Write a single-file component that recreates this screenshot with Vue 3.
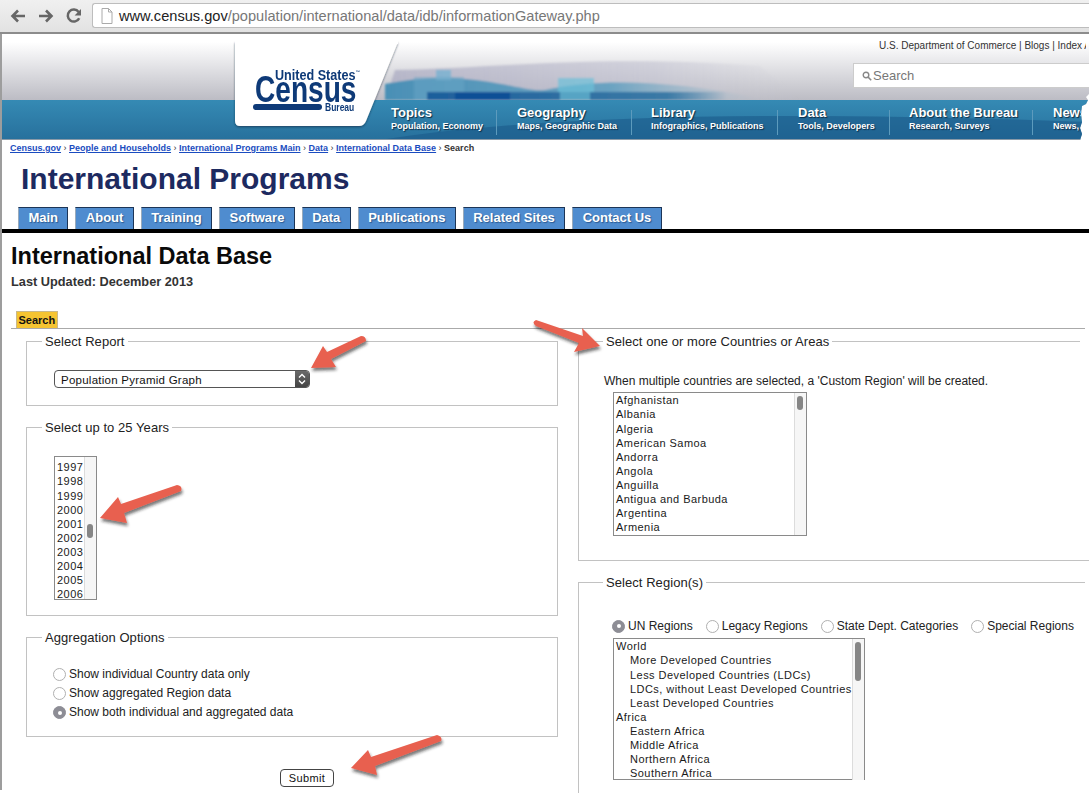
<script setup>
const nav = [
  { t: 'Topics', s: 'Population, Economy', w: 117, p: 11 },
  { t: 'Geography', s: 'Maps, Geographic Data', w: 135, p: 20 },
  { t: 'Library', s: 'Infographics, Publications', w: 146, p: 19 },
  { t: 'Data', s: 'Tools, Developers', w: 112, p: 20 },
  { t: 'About the Bureau', s: 'Research, Surveys', w: 143, p: 19 },
  { t: 'Newsroom', s: 'News, Events, Blogs', w: 140, p: 20 }
]
const crumbs = ['Census.gov', 'People and Households', 'International Programs Main', 'Data', 'International Data Base']
const tabs = ['Main', 'About', 'Training', 'Software', 'Data', 'Publications', 'Related Sites', 'Contact Us']
const years = ['1997', '1998', '1999', '2000', '2001', '2002', '2003', '2004', '2005', '2006']
const countries = ['Afghanistan', 'Albania', 'Algeria', 'American Samoa', 'Andorra', 'Angola', 'Anguilla', 'Antigua and Barbuda', 'Argentina', 'Armenia']
const aggregation = [
  { t: 'Show individual Country data only', on: false },
  { t: 'Show aggregated Region data', on: false },
  { t: 'Show both individual and aggregated data', on: true }
]
const regionTypes = [
  { t: 'UN Regions', on: true },
  { t: 'Legacy Regions', on: false },
  { t: 'State Dept. Categories', on: false },
  { t: 'Special Regions', on: false }
]
const regions = [
  { t: 'World', i: false },
  { t: 'More Developed Countries', i: true },
  { t: 'Less Developed Countries (LDCs)', i: true },
  { t: 'LDCs, without Least Developed Countries', i: true },
  { t: 'Least Developed Countries', i: true },
  { t: 'Africa', i: false },
  { t: 'Eastern Africa', i: true },
  { t: 'Middle Africa', i: true },
  { t: 'Northern Africa', i: true },
  { t: 'Southern Africa', i: true }
]
</script>

<template>
  <div class="root">
    <div class="chrome">
      <svg class="nav-icon" width="16" height="14" viewBox="0 0 16 14"><path d="M15 7H3M8 1.5 2.5 7 8 12.5" fill="none" stroke="#666" stroke-width="2.6"/></svg>
      <svg class="nav-icon fwd" width="16" height="14" viewBox="0 0 16 14"><path d="M1 7h12M8 1.5 13.5 7 8 12.5" fill="none" stroke="#666" stroke-width="2.6"/></svg>
      <svg class="nav-icon reload" width="16" height="16" viewBox="0 0 16 16"><path d="M13.2 10.2A6 6 0 1 1 12.6 4" fill="none" stroke="#666" stroke-width="2.5"/><path d="M15 1v6.4H8.6z" fill="#666"/></svg>
      <div class="address">
        <svg width="12" height="16" viewBox="0 0 12 16"><path d="M1 .5h6.5L11 4v11.5H1zM7.5.5V4H11" fill="#fff" stroke="#aaa"/></svg>
        <span class="url"><span class="host">www.census.gov</span>/population/international/data/idb/informationGateway.php</span>
      </div>
    </div>

    <header class="hdr">
      <svg class="art" width="1089" height="106" viewBox="0 0 1089 106">
        <defs>
          <linearGradient id="fade" x1="0" x2="1" y1="0" y2="0">
            <stop offset="0" stop-color="#4a90b6" />
            <stop offset=".6" stop-color="#5a9dbf" stop-opacity=".85" />
            <stop offset="1" stop-color="#9dbccb" stop-opacity="0" />
          </linearGradient>
          <linearGradient id="lav" x1="0" x2="1" y1="0" y2="0">
            <stop offset="0" stop-color="#a8a8c0" stop-opacity=".7" />
            <stop offset=".65" stop-color="#bcbccd" stop-opacity=".5" />
            <stop offset="1" stop-color="#c8c8d2" stop-opacity="0" />
          </linearGradient>
          <linearGradient id="dark" x1="0" x2="1" y1="0" y2="0">
            <stop offset="0" stop-color="#1d5f9c" />
            <stop offset=".8" stop-color="#3b7aa6" />
            <stop offset="1" stop-color="#3b7aa6" stop-opacity="0" />
          </linearGradient>
          <linearGradient id="bandg" x1="0" x2="0" y1="0" y2="1">
            <stop offset="0" stop-color="#358ab4" />
            <stop offset="1" stop-color="#27709c" />
          </linearGradient>
          <filter id="soft"><feGaussianBlur stdDeviation="1.2" /></filter>
          <filter id="cardshadow" x="-10%" y="-10%" width="120%" height="120%"><feDropShadow dx="0" dy="1" stdDeviation="1" flood-color="#123" flood-opacity=".6" /></filter>
        </defs>
        <g filter="url(#soft)">
          <path d="M395 36C500 34 600 20 760 32L800 66H385Z" fill="url(#lav)" />
          <path d="M385 66V50C415 44 445 42 475 46C510 50 530 58 545 56C600 44 670 46 760 64V66Z" fill="url(#fade)" />
          <rect x="436" y="36" width="15" height="10" fill="#7fb3d0" opacity=".9" />
          <rect x="414" y="43" width="50" height="23" fill="#6aa6c6" opacity=".5" />
          <rect x="558" y="44" width="36" height="22" fill="#6cc0d8" opacity=".7" />
          <rect x="427" y="58" width="300" height="8" fill="url(#dark)" />
          <rect x="455" y="58" width="55" height="8" fill="#0f4f96" />
          <rect x="560" y="58" width="30" height="8" fill="#57a4c4" />
        </g>
        <rect x="0" y="66" width="1089" height="40" fill="url(#bandg)" />
        <path d="M380 106C560 78 820 78 1089 88V106Z" fill="#1a5a8a" opacity=".6" />
        <rect x="0" y="105" width="1089" height="1" fill="#8a9aa8" />
        <path d="M235 8H398L366 87Q364 92 359 92H240Q235 92 235 87Z" fill="#fff" filter="url(#cardshadow)" />
        <rect x="235" y="0" width="163" height="10" fill="#fff" />
        <path d="M256 70h63a3 3 0 0 1 0 6h-63a3 3 0 0 1 0-6z" fill="#0e3a78" />
      </svg>
      <div class="logo">
        <span class="logo-us">United States<sup>™</sup></span>
        <span class="logo-c">Census</span>
        <span class="logo-b">Bureau</span>
      </div>
      <div class="hdr-top">
        <div class="links">U.S. Department of Commerce | Blogs | Index A-Z</div>
        <div class="search">
          <svg width="10" height="10" viewBox="0 0 10 10"><circle cx="4" cy="4" r="2.8" fill="none" stroke="#888" stroke-width="1.4"/><path d="M6 6l3.2 3.2" stroke="#888" stroke-width="1.6"/></svg>
          <span>Search</span>
        </div>
      </div>
      <nav class="band">
        <div v-for="n in nav" :key="n.t" class="nav-item" :style="{ width: n.w + 'px', paddingLeft: n.p + 'px' }">
          <div class="nav-t">{{ n.t }}</div>
          <div class="nav-s">{{ n.s }}</div>
        </div>
      </nav>
    </header>

    <div class="crumbs">
      <template v-for="c in crumbs" :key="c"><a class="crumb">{{ c }}</a><span class="sep"> › </span></template><span>Search</span>
    </div>
    <h1 class="prog">International Programs</h1>
    <div class="tabs">
      <div v-for="t in tabs" :key="t" class="tab">{{ t }}</div>
    </div>
    <h2 class="idb">International Data Base</h2>
    <div class="updated">Last Updated: December 2013</div>
    <div class="tabbar"><div class="ytab">Search</div></div>

    <div class="cols">
      <div class="left">
        <fieldset class="fs fs-report">
          <legend>Select Report</legend>
          <div class="select">
            <span>Population Pyramid Graph</span>
            <span class="sel-btn">
              <svg width="8" height="12" viewBox="0 0 8 12"><path d="M1 4.5 4 1.5 7 4.5M1 7.5 4 10.5 7 7.5" fill="none" stroke="#fff" stroke-width="1.4"/></svg>
            </span>
          </div>
        </fieldset>
        <fieldset class="fs fs-years">
          <legend>Select up to 25 Years</legend>
          <div class="list list-years">
            <div class="opts"><div v-for="y in years" :key="y" class="opt">{{ y }}</div></div>
            <div class="track"><i class="thumb thumb-y"></i></div>
          </div>
        </fieldset>
        <fieldset class="fs fs-agg">
          <legend>Aggregation Options</legend>
          <div class="agg-rows">
            <div v-for="a in aggregation" :key="a.t" class="radio-row">
              <i class="radio" :class="{ on: a.on }"></i><span>{{ a.t }}</span>
            </div>
          </div>
        </fieldset>
        <div class="submit">Submit</div>
      </div>

      <div class="right">
        <fieldset class="fs fs-ctry">
          <legend>Select one or more Countries or Areas</legend>
          <p class="note">When multiple countries are selected, a 'Custom Region' will be created.</p>
          <div class="list list-ctry">
            <div class="opts"><div v-for="c in countries" :key="c" class="opt">{{ c }}</div></div>
            <div class="track"><i class="thumb thumb-c"></i></div>
          </div>
        </fieldset>
        <fieldset class="fs fs-reg">
          <legend>Select Region(s)</legend>
          <div class="rtypes">
            <div v-for="r in regionTypes" :key="r.t" class="rtype">
              <i class="radio" :class="{ on: r.on }"></i><span>{{ r.t }}</span>
            </div>
          </div>
          <div class="list list-reg">
            <div class="opts">
              <div v-for="r in regions" :key="r.t" class="opt" :class="{ ind: r.i }">{{ r.t }}</div>
            </div>
            <div class="track"><i class="thumb thumb-r"></i></div>
          </div>
        </fieldset>
      </div>
    </div>

    <div class="rail"></div>

    <svg class="arrows" width="1089" height="798" viewBox="0 0 1089 798">
      <defs><filter id="ash" x="-20%" y="-20%" width="150%" height="150%"><feDropShadow dx="1" dy="3" stdDeviation="1.6" flood-color="#222" flood-opacity=".6" /></filter></defs>
      <g fill="#e8604f" filter="url(#ash)">
        <path d="M311 368 323 346 327 352 361 336Q366 336 366 341L331 359 336 367Z" />
        <path d="M600 346 574 352 579 343 536 326Q531 322 536 320L583 336 582 328Z" />
        <path d="M100 518 118 497 121 504 177 485Q183 486 181 491L124 513 127 523Z" />
        <path d="M351 768 368 750 371 757 437 735Q443 737 441 741L375 766 377 775Z" />
      </g>
    </svg>
  </div>
</template>

<style scoped>
.root {
  position: relative;
  width: 1089px;
  height: 798px;
  overflow: hidden;
  background: #fff;
  color: #111;
  font-family: "Liberation Sans", Arial, sans-serif;
}
.chrome {
  display: flex;
  align-items: flex-start;
  padding-top: 3px;
  box-sizing: border-box;
  border-bottom: 2px solid #8c8c8c;
  height: 34px;
  background: linear-gradient(#f0f0f0, #e2e2e2);
}
.nav-icon { margin: 6px 0 0 10px; flex: none; }
.nav-icon.fwd { margin-left: 12px; }
.nav-icon.reload { margin: 5px 0 0 12px; }
.address {
  display: flex;
  align-items: center;
  gap: 6px;
  margin-left: 10px;
  padding-left: 8px;
  flex: 1;
  height: 25px;
  box-sizing: border-box;
  background: #fff;
  border: 1px solid #bdbdbd;
  border-right: 0;
  border-radius: 3px 0 0 3px;
}
.url { font-size: 14.6px; color: #777; white-space: nowrap; }
.host { color: #222; }

.hdr {
  position: relative;
  height: 106px;
  background: linear-gradient(#fff 0, #fff 8px, #bcbcc4 66px);
  clip-path: polygon(0 0, 100% 0, 100% 60px, 1086px 63px, 1088px 66px, 1086px 70px, 1082px 72px, 1081px 80px, 1082px 88px, 1080px 94px, 1082px 100px, 1080px 106px, 0 106px);
}
.art { position: absolute; left: 0; top: 0; }
.logo {
  position: absolute;
  left: 255px;
  top: 33px;
  width: 110px;
  height: 60px;
  color: #0e3a78;
}
.logo span { position: absolute; white-space: nowrap; font-weight: 700; transform-origin: left center; }
.logo-us {
  left: 20px;
  top: 0;
  font-size: 14px;
  line-height: 16px;
  transform: scaleX(.9);
}
.logo-us sup { font-size: 5px; vertical-align: 6px; line-height: 0; }
.logo-c {
  left: 0;
  top: 3px;
  font-size: 36px;
  line-height: 40px;
  transform: scaleX(.78);
}
.logo-b {
  left: 70px;
  top: 35px;
  font-size: 10px;
  line-height: 12px;
  transform: scaleX(.85);
}
.hdr-top {
  position: absolute;
  left: 853px;
  right: -20px;
  top: 0;
}
.links {
  position: absolute;
  left: 26px;
  top: 6px;
  width: 207px;
  overflow: hidden;
  font-size: 10px;
  line-height: 12px;
  color: #333;
  white-space: nowrap;
}
.search {
  position: absolute;
  left: 0;
  right: 0;
  top: 29px;
  height: 25px;
  box-sizing: border-box;
  display: flex;
  align-items: center;
  gap: 1px;
  padding-left: 8px;
  background: #fff;
  border: 1px solid #ccc;
  font-size: 13px;
  color: #777;
}
.band {
  position: absolute;
  left: 380px;
  bottom: 0;
  height: 40px;
  display: flex;
  white-space: nowrap;
}
.nav-item {
  box-sizing: border-box;
  flex: none;
  height: 25px;
  margin-top: 10px;
  color: #fff;
  border-right: 1px solid #5d9bbd;
  text-shadow: 1px 1px 1px #0f2c44;
}
.nav-item:last-child { border-right: 0; }
.nav-t { font-size: 13px; font-weight: 700; line-height: 13px; margin-top: -4px; }
.nav-s { font-size: 9px; font-weight: 700; line-height: 12px; margin-top: 1px; }

.crumbs {
  height: 16px;
  padding-left: 10px;
  font-size: 9px;
  font-weight: 700;
  line-height: 16px;
  color: #333;
  white-space: nowrap;
}
.crumb { color: #1a4cc0; text-decoration: underline; }
.sep { font-weight: 400; }
.prog {
  margin: 0;
  padding-left: 21px;
  font-size: 30px;
  line-height: 46px;
  font-weight: 700;
  color: #1d2a60;
}
.tabs {
  display: flex;
  gap: 7px;
  margin-top: 5px;
  padding-left: 18px;
  height: 22px;
  border-bottom: 4px solid #000;
}
.tab {
  box-sizing: border-box;
  height: 22px;
  padding: 0 9.4px;
  background: #4f8ccf;
  border-top: 1px solid #1c3557;
  border-right: 1px solid #1c3557;
  border-left: 1px solid #9ab;
  color: #fff;
  font-size: 13px;
  font-weight: 700;
  line-height: 20px;
  text-shadow: 1px 1px 1px #2c5a90;
}
.idb {
  margin: 9px 0 0 11px;
  font-size: 23.5px;
  line-height: 28px;
  font-weight: 700;
  color: #0a0a0a;
}
.updated {
  margin: 4px 0 0 11px;
  font-size: 12.75px;
  line-height: 16px;
  font-weight: 700;
  color: #333;
}
.tabbar {
  margin: 21px 0 0 11px;
  width: 1074px;
  padding-left: 5px;
  box-sizing: border-box;
  height: 18px;
  border-bottom: 1px solid #aaa;
}
.ytab {
  display: inline-block;
  box-sizing: border-box;
  height: 17px;
  padding: 0 1.5px;
  background: #f5c431;
  border: 1px solid #c9b98a;
  border-bottom: 0;
  font-size: 11px;
  font-weight: 700;
  line-height: 17px;
  vertical-align: top;
}

.cols {
  display: flex;
  padding: 5px 0 0 26px;
}
.left { width: 532px; flex: none; }
.right { width: 511px; margin-left: 20px; flex: none; }

.fs {
  position: relative;
  box-sizing: border-box;
  margin: 0;
  min-width: 0;
  border: 1px solid #c2c2c2;
  padding: 0;
  font-size: 12px;
}
.fs legend {
  margin-left: 15px;
  padding: 0 3px;
  font-size: 13px;
  line-height: 15px;
  letter-spacing: .06px;
  color: #222;
}
.right .fs legend { margin-left: 24px; }
.fs-report { height: 72px; }
.fs-years { height: 196px; margin-top: 14px; }
.fs-agg { height: 107px; margin-top: 14px; }
.agg-rows { margin: 20px 0 0 26px; }

.select {
  display: flex;
  justify-content: space-between;
  box-sizing: border-box;
  width: 256px;
  height: 18px;
  margin: 21px 0 0 27px;
  padding-left: 6px;
  border: 1px solid #555;
  border-radius: 4px;
  font-size: 11.5px;
  line-height: 19px;
  letter-spacing: .25px;
  overflow: hidden;
}
.sel-btn {
  display: flex;
  align-items: center;
  justify-content: center;
  width: 14px;
  background: linear-gradient(#6a6a6a, #444);
}
.list {
  position: relative;
  display: flex;
  box-sizing: border-box;
  border: 1px solid #8a8a8a;
  font-size: 11px;
  line-height: 14.1px;
  letter-spacing: .45px;
  color: #1a1a1a;
  background: #fff;
}
.opts { flex: 1; overflow: hidden; padding: .4px 0 0 2px; }
.opt { height: 14.1px; white-space: nowrap; }
.opt.ind { padding-left: 14px; }
.track {
  position: relative;
  flex: none;
  width: 11px;
  background: #f6f6f6;
  border-left: 1px solid #dcdcdc;
}
.thumb {
  position: absolute;
  left: 2px;
  width: 6px;
  border-radius: 3px;
  background: #868686;
}
.list-years { width: 43px; height: 144px; margin: 21px 0 0 27px; }
.list-years .opts { padding-top: 3.4px; }
.thumb-y { top: 67px; height: 14px; }
.list-ctry { width: 194px; height: 144px; margin-left: 34px; }
.thumb-c { top: 3px; height: 14px; }
.list-reg { width: 252px; height: 142px; margin-left: 34px; border-bottom: 0; }
.list-reg .opts { border-bottom: 1px solid #8a8a8a; }
.thumb-r { top: 3px; height: 39px; }

.radio-row { display: flex; align-items: center; gap: 3px; height: 19px; color: #222; line-height: 19px; }
.radio {
  flex: none;
  display: block;
  position: relative;
  box-sizing: border-box;
  width: 13px;
  height: 13px;
  border: 1px solid #b0b0b0;
  border-radius: 50%;
  background: #fff;
}
.radio.on { background: #8d8d95; border-color: #8d8d95; }
.radio.on::after {
  content: "";
  position: absolute;
  left: 3.5px;
  top: 3.5px;
  width: 4px;
  height: 4px;
  border-radius: 50%;
  background: #fff;
}
.submit {
  box-sizing: border-box;
  width: 54px;
  height: 18px;
  margin: 32px 0 0 254px;
  border: 1px solid #444;
  border-radius: 4px;
  font-size: 11px;
  line-height: 16px;
  letter-spacing: .4px;
  text-align: center;
}
.fs-ctry { width: 502px; height: 227px; border-right: 0; }
.fs-ctry::after {
  content: "";
  position: absolute;
  left: 100%;
  bottom: -1px;
  width: 9px;
  height: 1px;
  background: #c2c2c2;
}
.note { margin: 25px 0 4px 25px; font-size: 12px; line-height: 14px; white-space: nowrap; color: #222; }
.fs-reg { width: 507px; height: 218px; margin-top: 14px; border-right: 0; border-bottom: 0; }
.rtypes { display: flex; margin: 29px 0 5px 33px; color: #222; line-height: 14px; }
.rtype { display: flex; align-items: center; gap: 3px; margin-right: 13px; white-space: nowrap; }

.rail {
  position: absolute;
  left: 0;
  top: 34px;
  width: 2px;
  height: 756px;
  background: #9d9d9d;
}
.arrows { position: absolute; left: 0; top: 0; pointer-events: none; }
</style>
